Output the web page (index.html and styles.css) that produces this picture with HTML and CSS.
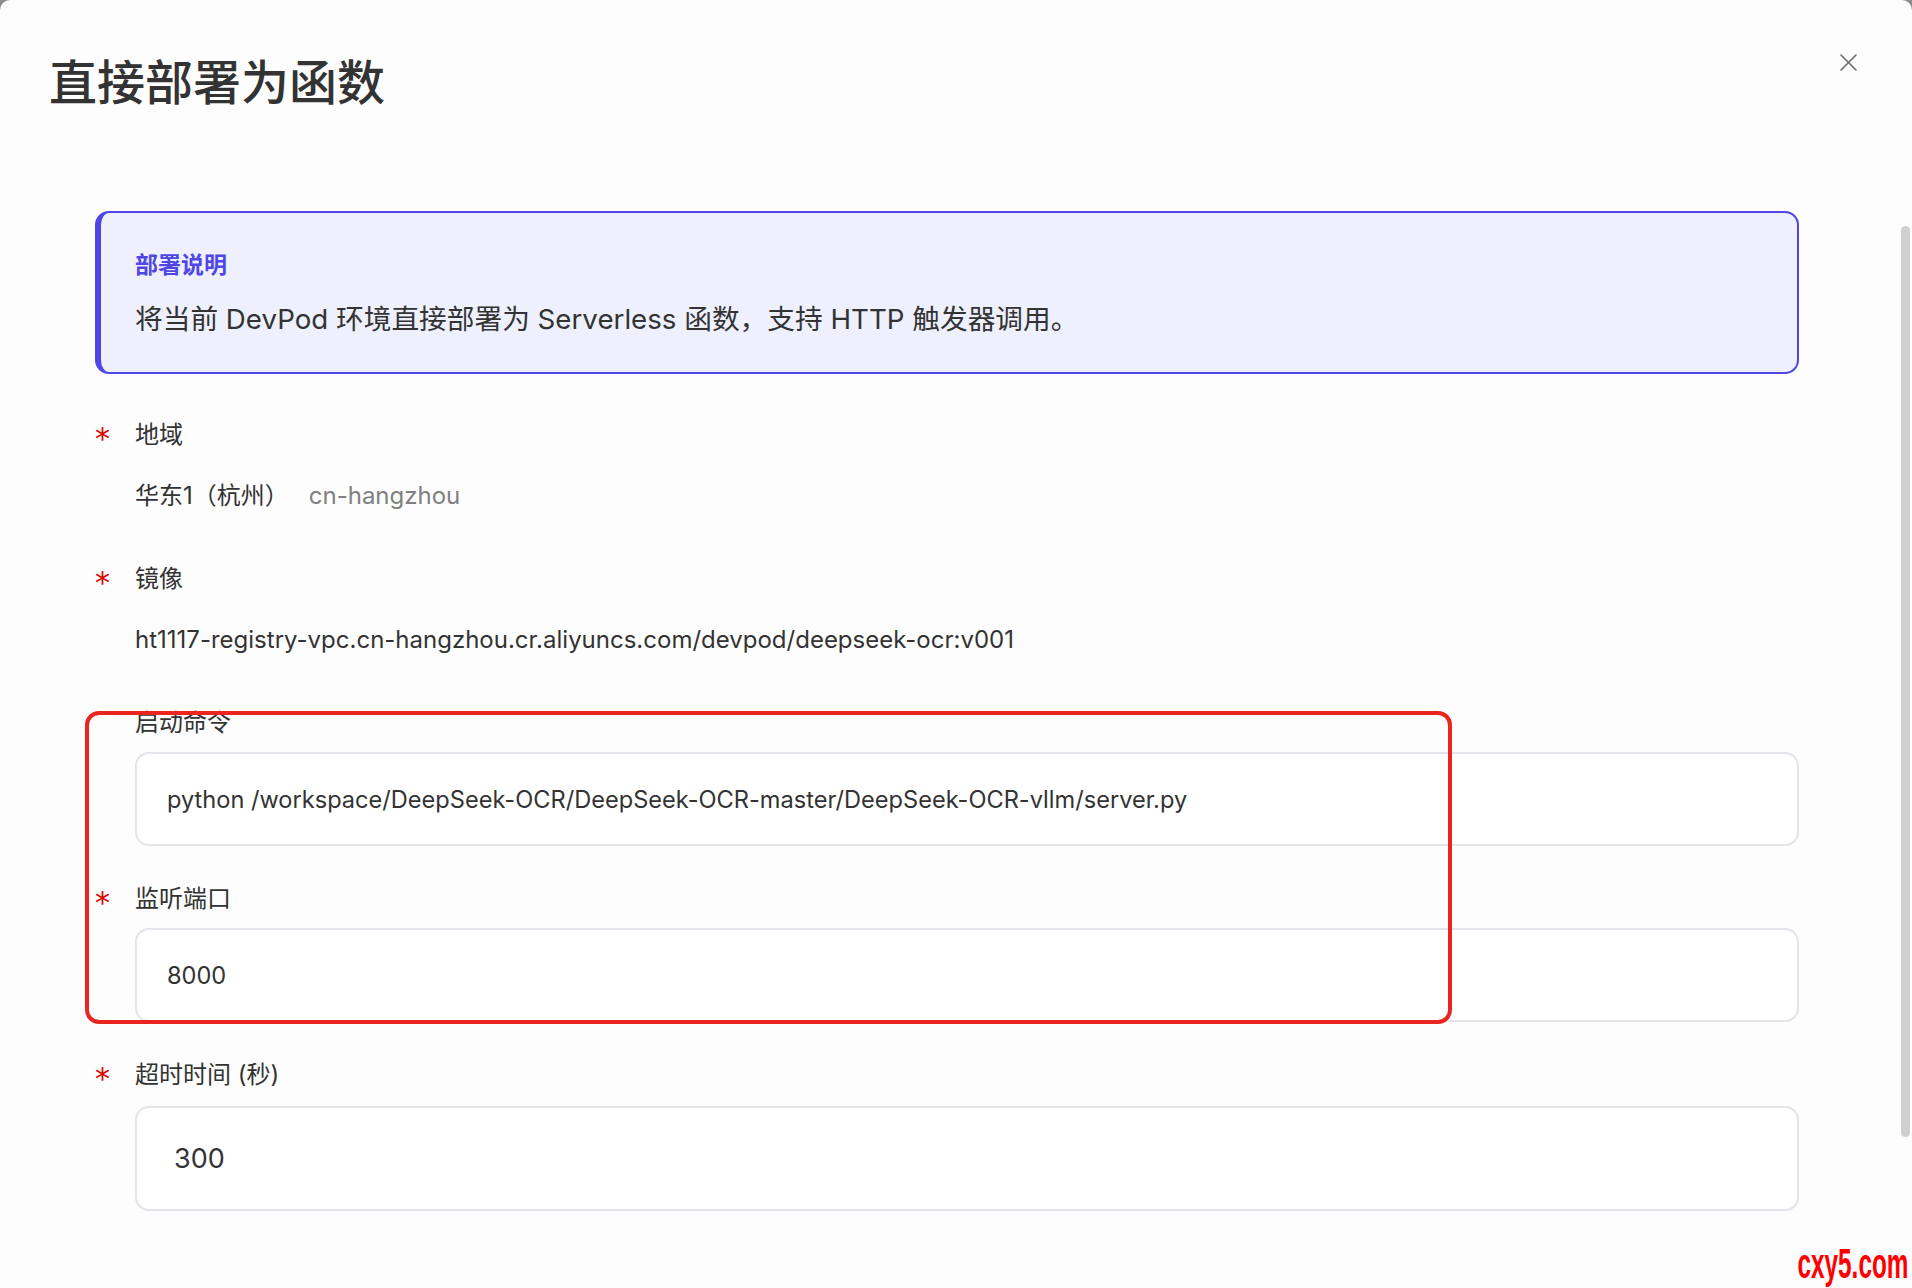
FILE: index.html
```html
<!DOCTYPE html>
<html lang="zh-CN">
<head>
<meta charset="utf-8">
<title>直接部署为函数</title>
<link rel="stylesheet" href="styles.css">
</head>
<body>
<div class="modal">
  <header class="modal-header">
    <h1 class="modal-title">直接部署为函数</h1>
    <button class="close" aria-label="关闭">
      <svg viewBox="0 0 17 17" width="17" height="17"><path d="M1 1 L16 16 M16 1 L1 16" stroke="#6b6b6b" stroke-width="1.6" fill="none" stroke-linecap="round"/></svg>
    </button>
  </header>
  <div class="modal-body">
    <div class="alert">
      <div class="alert-title">部署说明</div>
      <div class="alert-text">将当前 DevPod 环境直接部署为 Serverless 函数，支持 HTTP 触发器调用。</div>
    </div>

    <div class="field field-static">
      <div class="field-label"><span class="req">*</span>地域</div>
      <div class="field-value">华东1（杭州）<span class="muted">cn-hangzhou</span></div>
    </div>

    <div class="field field-static">
      <div class="field-label"><span class="req">*</span>镜像</div>
      <div class="field-value">ht1117-registry-vpc.cn-hangzhou.cr.aliyuncs.com/devpod/deepseek-ocr:v001</div>
    </div>

    <div class="field">
      <div class="field-label"><span class="req req-empty"></span>启动命令</div>
      <div class="input">python /workspace/DeepSeek-OCR/DeepSeek-OCR-master/DeepSeek-OCR-vllm/server.py</div>
    </div>

    <div class="field">
      <div class="field-label"><span class="req">*</span>监听端口</div>
      <div class="input">8000</div>
    </div>

    <div class="field">
      <div class="field-label"><span class="req">*</span>超时时间 (秒)</div>
      <div class="input input-lg">300</div>
    </div>
  </div>

  <div class="annotation"></div>
  <div class="scroll-thumb"></div>
  <div class="watermark">cxy5.com</div>
</div>
</body>
</html>
```
FILE: styles.css
```css
html, body {
  margin: 0;
  padding: 0;
}

body {
  background: #8c8c8c;
  font-family: Inter, "Noto Sans CJK SC", sans-serif;
  color: #333;
}

.modal {
  position: relative;
  width: 1912px;
  height: 1288px;
  background: #fdfdfd;
  border-radius: 10px 10px 0 0;
  overflow: hidden;
}

.modal-header {
  display: flex;
  justify-content: space-between;
  align-items: flex-start;
  padding: 49px 55px 0 49px;
}

.modal-title {
  margin: 0;
  font-family: "Noto Sans CJK SC", sans-serif;
  font-size: 48px;
  line-height: 60px;
  font-weight: 500;
  color: #333;
}

.close {
  margin-top: 5px;
  width: 17px;
  height: 17px;
  padding: 0;
  border: 0;
  background: none;
  display: flex;
}

.modal-body {
  padding: 102px 113px 0 95px;
}

.alert {
  border: 2px solid #4f46e5;
  border-left-width: 6px;
  border-radius: 14px;
  background: #eef0fd;
  padding: 34px 30px 33px 34px;
  margin-bottom: 44px;
}

.alert-title {
  font-family: "Noto Sans CJK SC", sans-serif;
  font-size: 23px;
  line-height: 32px;
  font-weight: 600;
  color: #4f46e5;
}

.alert-text {
  margin-top: 20px;
  font-size: 27.7px;
  line-height: 40px;
  color: #333;
}

.field {
  padding-left: 40px;
}

.field + .field {
  margin-top: 36px;
}

.field-static {
  padding-bottom: 13px;
}

.field-label {
  display: flex;
  align-items: flex-start;
  margin-left: -40px;
  font-size: 24px;
  line-height: 34px;
  height: 34px;
  color: #333;
}

.req {
  width: 40px;
  flex: none;
  color: #e00000;
  font-family: "DejaVu Sans", sans-serif;
  font-size: 30px;
  line-height: 34px;
  padding-top: 4px;
  margin-bottom: -4px;
}

.field-value {
  margin-top: 27px;
  font-size: 24px;
  line-height: 34px;
  color: #333;
}

.muted {
  margin-left: 20px;
  color: #808080;
}

.input {
  box-sizing: border-box;
  margin-top: 12px;
  height: 94px;
  display: flex;
  align-items: center;
  padding: 0 30px;
  border: 2px solid #e4e4ea;
  border-radius: 14px;
  background: #fff;
  font-size: 23.6px;
  color: #333;
}

.input-lg {
  margin-top: 14px;
  height: 105px;
  padding-left: 37px;
  font-size: 27px;
}

.annotation {
  position: absolute;
  left: 85px;
  top: 711px;
  width: 1367px;
  height: 313px;
  box-sizing: border-box;
  border: 4px solid #e8251f;
  border-radius: 14px;
  pointer-events: none;
}

.scroll-thumb {
  position: absolute;
  left: 1901px;
  top: 226px;
  width: 9px;
  height: 911px;
  border-radius: 5px;
  background: #d0d0d0;
}

.watermark {
  position: absolute;
  right: 4px;
  bottom: 0;
  font-family: "Liberation Sans", sans-serif;
  font-weight: 700;
  font-size: 42px;
  line-height: 48px;
  color: #ff0000;
  transform: scaleX(0.58);
  transform-origin: right bottom;
}
```
